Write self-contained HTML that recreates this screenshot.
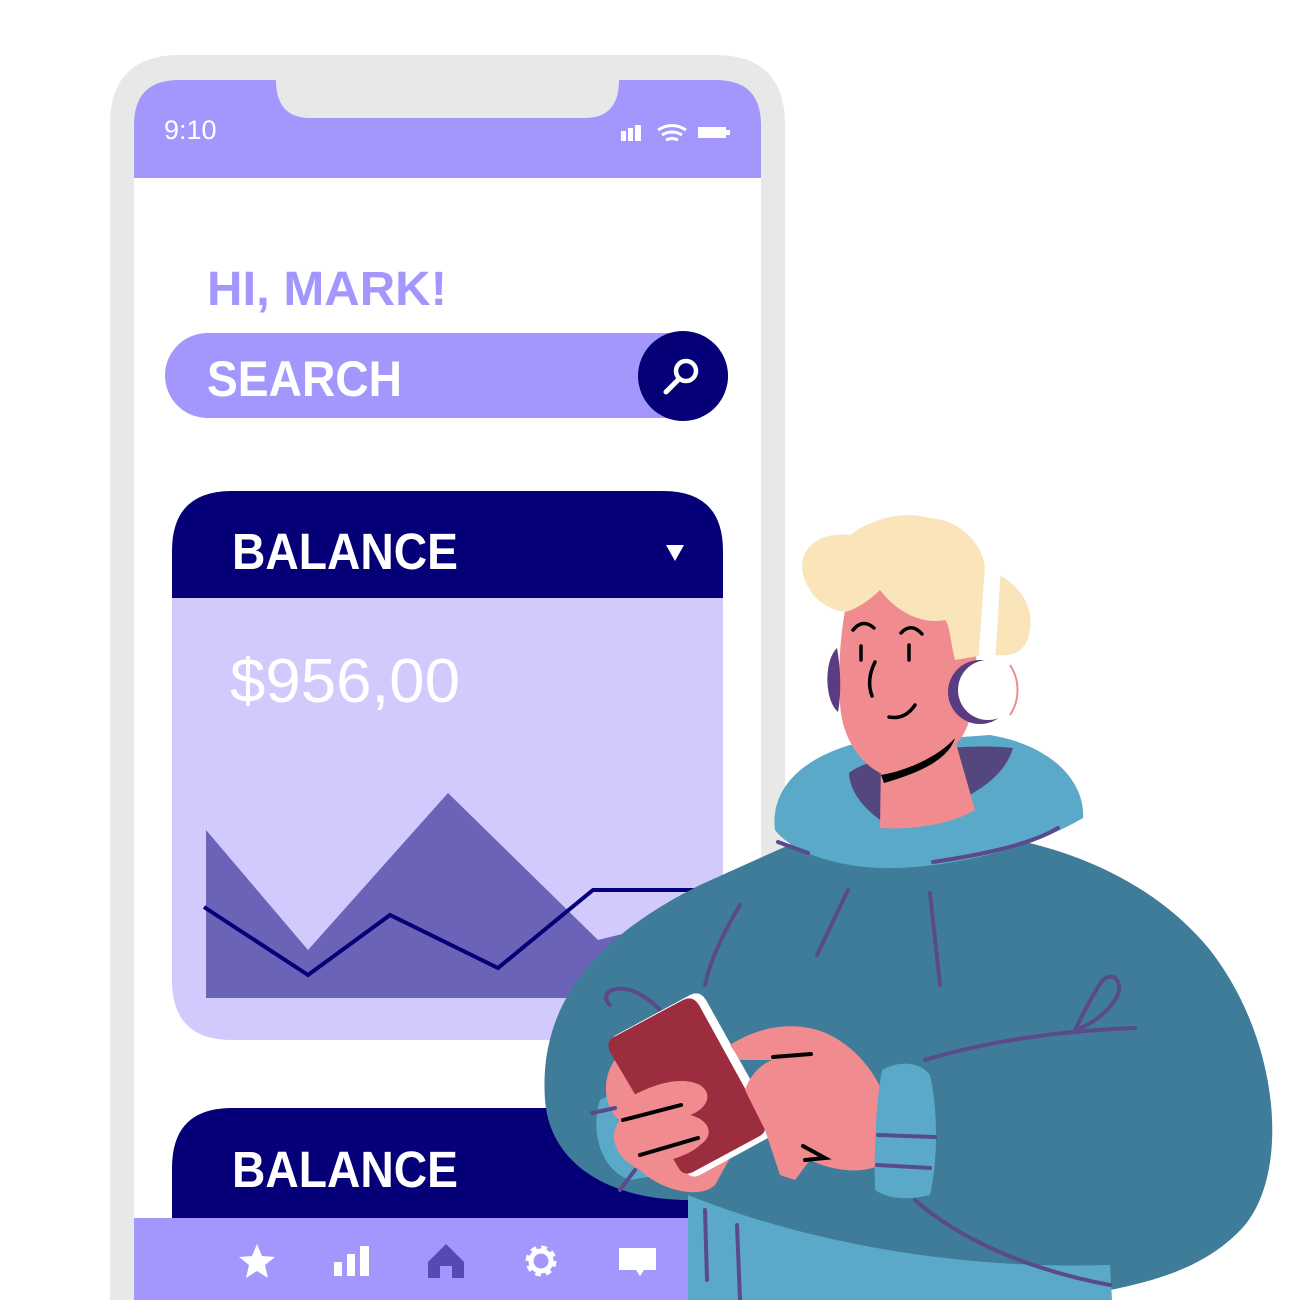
<!DOCTYPE html>
<html><head><meta charset="utf-8"><style>
html,body{margin:0;padding:0;background:#fff;width:1300px;height:1300px;overflow:hidden}
svg{display:block}
text{font-family:"Liberation Sans",sans-serif}
</style></head><body>
<svg width="1300" height="1300" viewBox="0 0 1300 1300" xmlns="http://www.w3.org/2000/svg">
<!-- phone frame -->
<path d="M110,1300 V125 Q110,55 180,55 H715 Q785,55 785,125 V1300 Z" fill="#e8e8e8"/>
<path d="M134,1300 V125 Q134,80 179,80 H716 Q761,80 761,125 V1300 Z" fill="#fff"/>
<path d="M134,178 V125 Q134,80 179,80 H716 Q761,80 761,125 V178 Z" fill="#a397fd"/>
<path d="M276,80 H619 Q619,118 585,118 H310 Q276,118 276,80 Z" fill="#e8e8e8"/>
<text x="164" y="139" font-size="27" fill="#fff">9:10</text>
<rect x="621" y="131" width="5" height="10" fill="#fff"/><rect x="628" y="128" width="5" height="13" fill="#fff"/><rect x="635" y="125" width="6" height="16" fill="#fff"/>
<path d="M658,130 Q672,121 686,130 M662,135 Q672,129 682,135 M666,140 Q672,137 678,140" stroke="#fff" stroke-width="3" fill="none"/>
<rect x="698" y="127" width="28" height="11" fill="#fff"/><rect x="726" y="130" width="4" height="5" fill="#fff"/>
<text x="207" y="305" font-size="48" font-weight="bold" fill="#a397fd" textLength="240" lengthAdjust="spacingAndGlyphs">HI, MARK!</text>
<rect x="165" y="333" width="563" height="85" rx="42.5" fill="#a397fd"/>
<circle cx="683" cy="376" r="45" fill="#050077"/>
<circle cx="686" cy="371" r="10" stroke="#fff" stroke-width="4.5" fill="none"/>
<line x1="678" y1="380" x2="666" y2="392" stroke="#fff" stroke-width="5" stroke-linecap="round"/>
<text x="207" y="396" font-size="50" font-weight="bold" fill="#fff" textLength="195" lengthAdjust="spacingAndGlyphs">SEARCH</text>
<!-- card 1 -->
<path d="M172,598 V551 Q172,491 232,491 H663 Q723,491 723,551 V598 Z" fill="#050077"/>
<path d="M172,598 H723 V980 Q723,1040 663,1040 H232 Q172,1040 172,980 Z" fill="#d2cafd"/>
<text x="232" y="569" font-size="51" font-weight="bold" fill="#fff" textLength="226" lengthAdjust="spacingAndGlyphs">BALANCE</text>
<path d="M666,545 H684 L675,561 Z" fill="#fff"/>
<text x="230" y="702" font-size="62" fill="#fff" textLength="230" lengthAdjust="spacingAndGlyphs">$956,00</text>
<path d="M206,830 L308,950 L448,793 L598,940 L700,915 L700,998 L206,998 Z" fill="#6b63b8"/>
<polyline points="204,907 308,975 390,915 498,968 593,890 700,890" fill="none" stroke="#050077" stroke-width="4"/>
<!-- card 2 -->
<path d="M172,1222 V1168 Q172,1108 232,1108 H663 Q723,1108 723,1168 V1222 Z" fill="#050077"/>
<text x="232" y="1187" font-size="51" font-weight="bold" fill="#fff" textLength="226" lengthAdjust="spacingAndGlyphs">BALANCE</text>
<rect x="134" y="1218" width="627" height="82" fill="#a397fd"/>
<path d="M257,1244 L262,1256 L275,1257 L265,1265 L268,1278 L257,1271 L246,1278 L249,1265 L239,1257 L252,1256 Z" fill="#fff"/>
<rect x="334" y="1262" width="8" height="14" fill="#fff"/><rect x="347" y="1254" width="8" height="22" fill="#fff"/><rect x="360" y="1246" width="9" height="30" fill="#fff"/>
<path d="M428,1262 L446,1244 L464,1262 V1278 H452 V1266 H440 V1278 H428 Z" fill="#5449b5"/>
<circle cx="541" cy="1261" r="12" stroke="#fff" stroke-width="7" fill="none" stroke-dasharray="5 4.4"/>
<circle cx="541" cy="1261" r="10" stroke="#fff" stroke-width="5" fill="none"/>
<path d="M619,1248 H656 V1270 H644 L640,1276 L636,1270 H619 Z" fill="#fff"/>
<!-- person -->
<path d="M545,1100 C538,1000 600,935 700,885 L800,840 C950,810 1120,840 1210,950 C1280,1040 1290,1170 1245,1225 C1210,1265 1160,1280 1110,1290 L1110,1300 L690,1300 L690,1200 C610,1200 550,1165 545,1100 Z" fill="#3e7c99"/>
<path d="M688,1195 C800,1240 950,1270 1110,1265 L1112,1300 H688 Z" fill="#5ba9c8"/>
<path d="M775,830 C770,790 800,760 850,745 L990,735 C1050,745 1085,780 1083,818 C1030,850 940,870 880,868 C830,866 790,850 775,830 Z" fill="#5ba9c8"/>
<path d="M849,773 C870,755 960,742 1013,748 C1005,775 980,790 960,800 L880,820 C860,805 850,790 849,773 Z" fill="#54477e"/>
<path d="M881,760 L955,740 L975,810 C950,825 910,830 880,828 Z" fill="#f08c8f"/>
<path d="M845,610 C850,585 900,575 945,590 L975,640 C980,690 972,730 955,745 C930,770 900,778 880,773 C855,760 840,730 840,700 C838,670 840,640 845,610 Z" fill="#f08c8f"/>
<path d="M881,775 C910,770 940,755 955,738 C950,755 930,770 884,783 Z" fill="#000"/>
<path d="M810,590 C790,560 810,530 850,535 C870,520 900,510 930,518 C960,520 985,545 985,570 C1010,575 1035,600 1030,630 C1025,660 1005,655 985,655 L955,660 C950,640 950,625 945,620 C920,625 895,610 880,590 C870,600 855,610 845,612 C830,610 815,600 810,590 Z" fill="#f9e5b9"/>
<path d="M985,565 L1001,565 L995,665 L978,665 Z" fill="#fff"/>
<path d="M837,648 C824,660 824,700 838,712 C842,690 840,665 837,648 Z" fill="#5a3c82"/>
<circle cx="980" cy="692" r="32" fill="#5a3c82"/>
<circle cx="988" cy="690" r="30" fill="#fff"/>
<path d="M1010,665 C1020,680 1020,700 1010,715" stroke="#f08c8f" stroke-width="2" fill="none"/>
<g stroke="#000" stroke-width="3.5" fill="none" stroke-linecap="round">
<path d="M853,630 Q863,618 874,628"/>
<path d="M901,633 Q911,622 922,634"/>
<path d="M861,646 V660"/><path d="M909,645 V660"/>
<path d="M875,662 Q866,680 872,696"/>
<path d="M889,717 Q905,720 915,705"/>
</g>
<g stroke="#5a4a8a" stroke-width="4" fill="none" stroke-linecap="round">
<path d="M778,842 L808,853"/>
<path d="M933,862 C980,855 1030,845 1058,828"/>
<path d="M740,905 C725,930 710,960 705,985"/>
<path d="M848,890 L817,955"/>
<path d="M930,893 L940,985"/>
<path d="M925,1060 C990,1040 1070,1030 1135,1028"/>
<path d="M1075,1030 C1085,1010 1095,990 1103,980 C1115,970 1125,985 1115,1000 C1105,1015 1090,1025 1075,1030"/>
<path d="M610,1005 C600,995 610,985 630,990 C645,995 655,1005 660,1010"/>
<path d="M915,1200 C960,1240 1030,1270 1110,1285"/>
<path d="M705,1210 L707,1280"/><path d="M737,1225 L740,1300"/>
</g>
<path d="M600,1100 C590,1130 600,1170 630,1180 L660,1175 L640,1080 Z" fill="#5ba9c8"/>
<path d="M615,1060 C600,1080 605,1110 620,1120 C605,1140 620,1160 640,1170 C660,1190 700,1200 715,1185 L740,1140 L710,1060 Z" fill="#f08c8f"/>
<path d="M616,1035 L690,995 Q700,990 706,1000 L773,1120 Q778,1132 768,1138 L700,1175 Q690,1180 685,1170 L612,1050 Q608,1040 616,1035 Z" fill="#fff"/>
<path d="M612,1038 L683,1000 Q693,995 699,1005 L764,1123 Q768,1132 758,1137 L693,1172 Q683,1177 678,1167 L610,1052 Q606,1043 612,1038 Z" fill="#9b2d3e"/>
<path d="M625,1100 C650,1085 680,1075 700,1085 C715,1095 705,1110 690,1115 C710,1120 715,1135 700,1145 C690,1155 670,1160 655,1165 C640,1168 620,1160 618,1140 Z" fill="#f08c8f"/>
<path d="M730,1045 C760,1025 800,1020 830,1035 C860,1050 880,1080 885,1100 L880,1165 C860,1175 830,1170 810,1160 L795,1180 L780,1175 L765,1130 L745,1090 C750,1075 760,1065 772,1060 L740,1060 Z" fill="#f08c8f"/>
<path d="M882,1070 C900,1060 920,1062 930,1075 C938,1110 938,1160 930,1195 C910,1200 890,1200 875,1190 C874,1150 876,1100 882,1070 Z" fill="#5ba9c8"/>
<g stroke="#5a4a8a" stroke-width="4" stroke-linecap="round"><path d="M878,1135 L935,1137"/><path d="M877,1165 L930,1168"/><path d="M592,1113 L615,1108"/><path d="M620,1190 L635,1170"/></g>
<g stroke="#000" stroke-width="4" stroke-linecap="round" fill="none">
<path d="M773,1057 L811,1054"/>
<path d="M803,1146 L825,1158 L805,1160"/>
<path d="M623,1120 L681,1105"/>
<path d="M640,1155 L698,1138"/>
</g>
</svg>
</body></html>
